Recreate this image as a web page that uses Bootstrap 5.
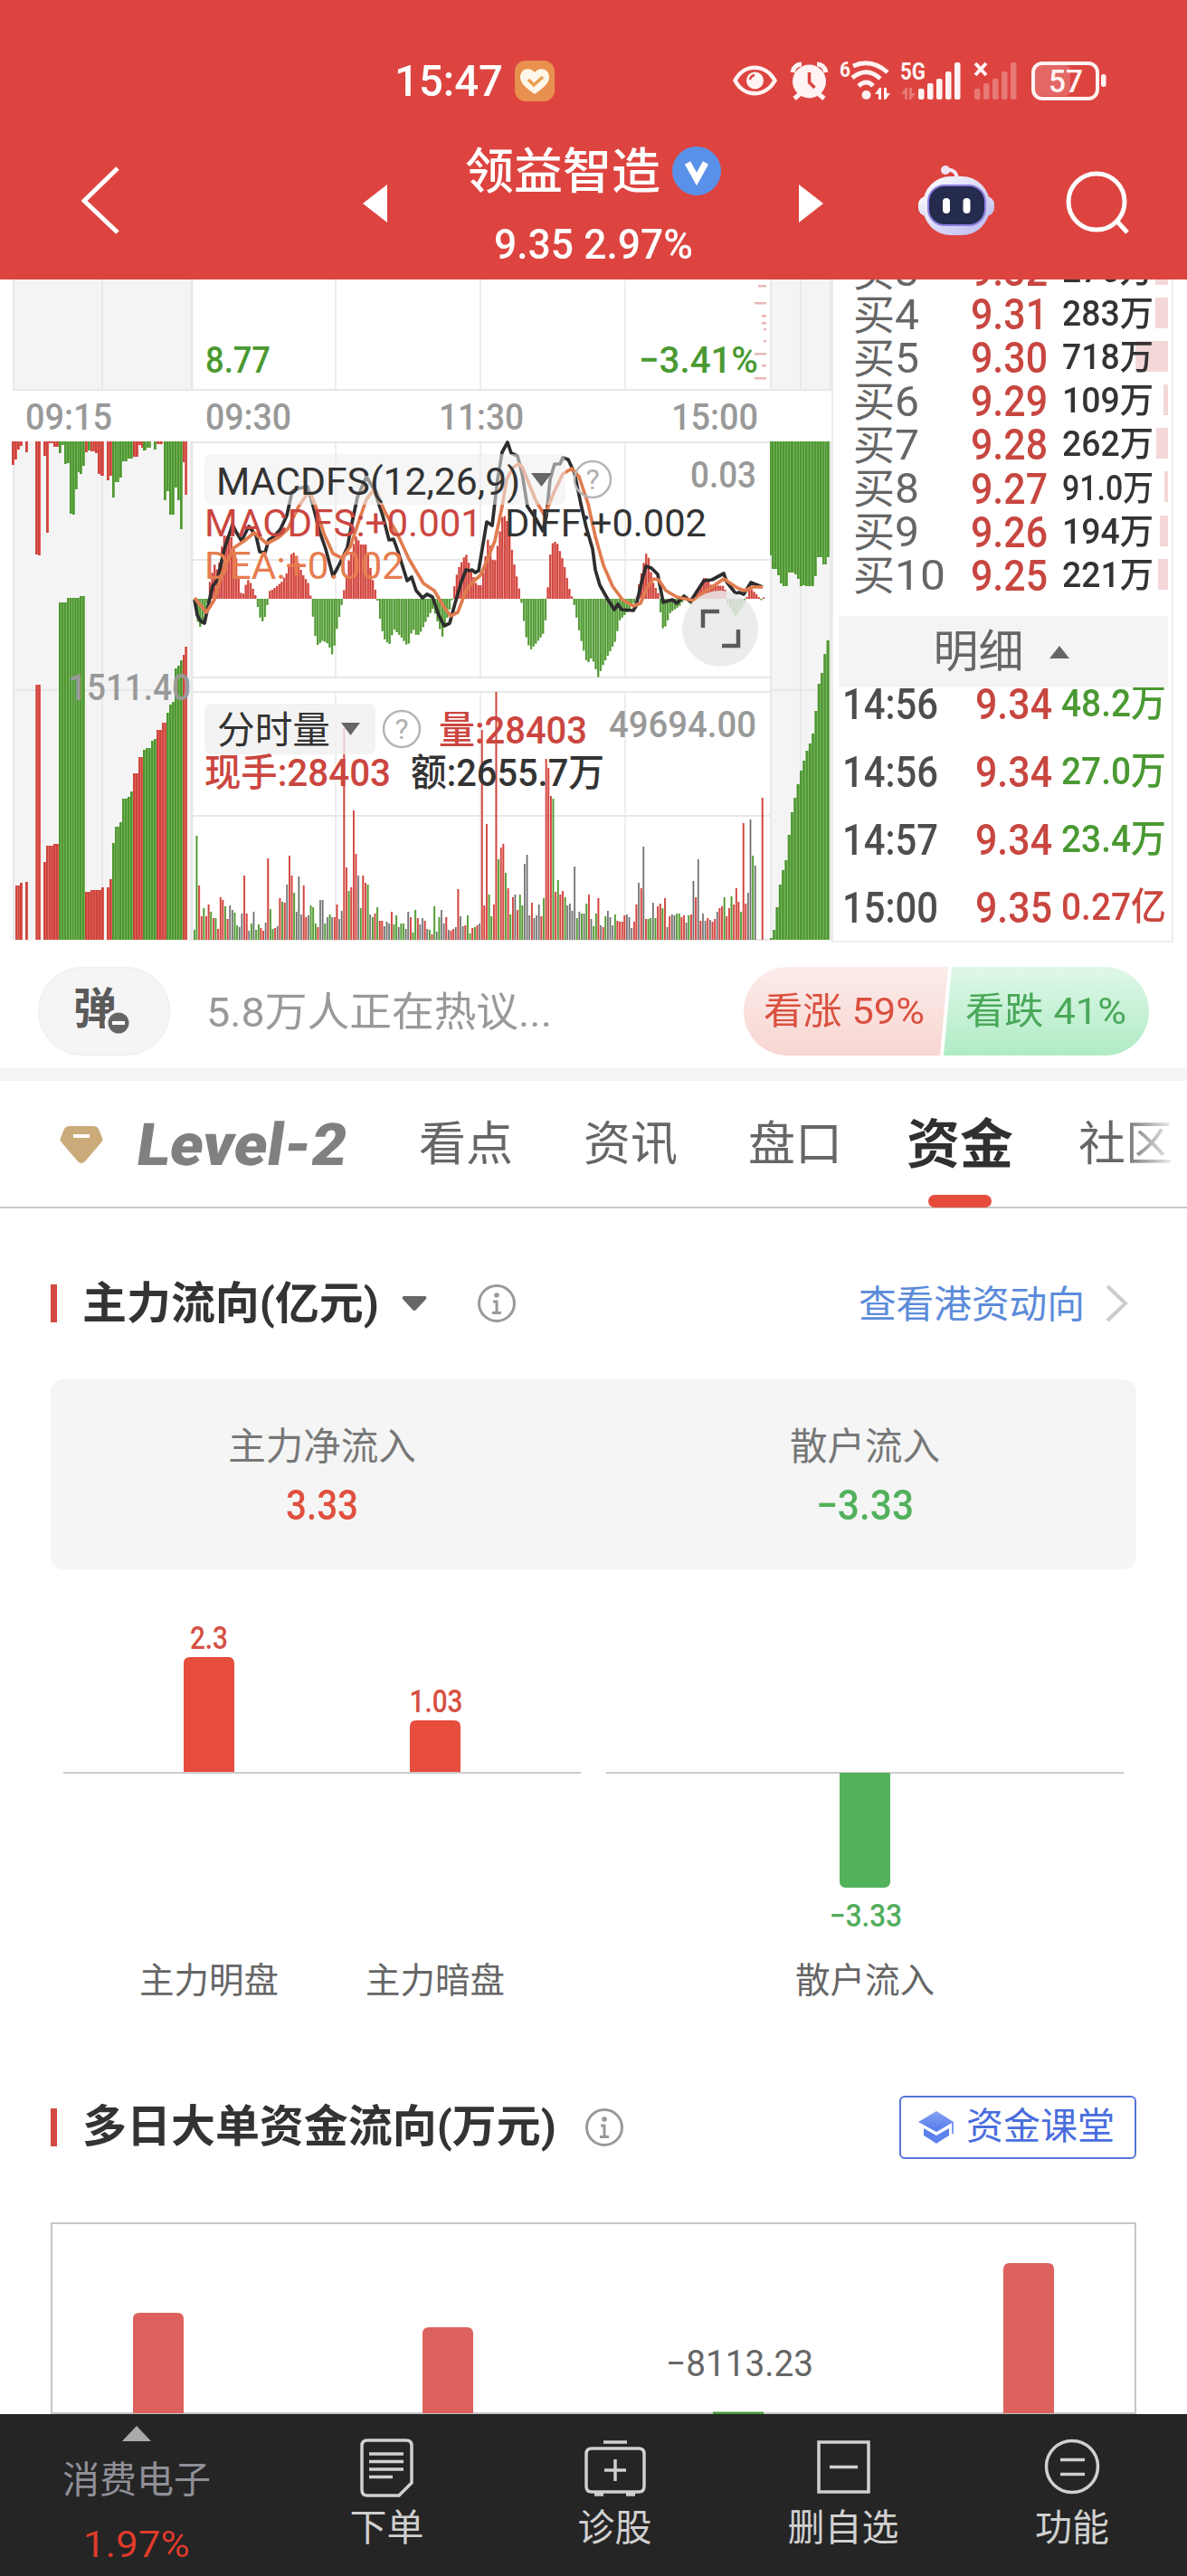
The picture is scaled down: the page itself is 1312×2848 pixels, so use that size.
<!DOCTYPE html>
<html lang="zh-CN">
<head>
    <meta charset="UTF-8">
    <meta name="viewport" content="width=device-width, initial-scale=1.0">
    <title>领益智造 - 资金</title>
    <link href="https://cdn.jsdelivr.net/npm/bootstrap@5.3.0/dist/css/bootstrap.min.css" rel="stylesheet">
    <style>
        body {
            width: 1312px;
            height: 2848px;
            overflow: hidden;
            font-family: Roboto, "Noto Sans CJK SC", sans-serif;
            color: #333;
            background: #fff;
            line-height: 1;
        }
        svg { display: block; flex: none; }
        .fit { display: inline-block; white-space: nowrap; transform-origin: 0 50%; }
        .up { color: #e0503f; }
        .down { color: #52b15c; }

        .top-bar { background: #dd4440; color: #fff; height: 309px; }
        .status-row { height: 135px; padding: 64px 0 0 436px; }
        .status-row .clock { font-size: 48px; font-weight: 500; width: 133px; padding-top: 2px; }
        .heart { margin-top: 3px; }
        .status-icons { margin-left: 196px; }
        .title-row { height: 174px; padding-left: 90px; }
        .stock-box { width: 455px; height: 174px; padding-top: 25px; }
        .stock-name { font-size: 54px; font-weight: 500; height: 58px; }
        .stock-name span { padding-top: 3px; }
        .stock-price { font-size: 47px; font-weight: 500; margin-top: 28px; }

        .quote-row { height: 733px; }
        .order-panel { width: 378px; height: 733px; border: 2px solid #ededed; border-top: 0; padding: 0 4px 0 6px; overflow: hidden; }
        .book { height: 372px; overflow: hidden; }
        .book-list { margin-top: -35px; }
        .book-item { height: 48.1px; padding: 3px 0 0 16px; position: relative; }
        .book-item .b-label { width: 130px; font-size: 46px; color: #666; }
        .book-item .b-price { width: 101px; font-size: 49px; font-weight: 500; color: #c84640; }
        .book-item .b-vol { font-size: 39px; font-weight: 500; color: #333; position: relative; }
        .book-item .b-bar { position: absolute; right: 0; top: 7px; height: 34px; background: #f4d7d8; }
        .detail-btn { height: 79px; background: #f4f4f4; color: #666; font-size: 50px; gap: 28px; padding-right: 5px; }
        .deals { height: 280px; overflow: hidden; }
        .deal-item { height: 75px; padding: 3px 0 0 4px; }
        .deals .deal-item:first-child { margin-top: -21px; }
        .deal-item .d-time { width: 147px; font-size: 49px; font-weight: 500; color: #4d4d4d; }
        .deal-item .d-price { width: 95px; font-size: 49px; font-weight: 500; color: #c84640; }
        .deal-item .d-vol { font-size: 42px; font-weight: 500; }

        .talk-row { height: 139px; padding: 27px 42px 14px 42px; }
        .dan-btn { width: 146px; height: 98px; border-radius: 49px; background: #f5f5f5; border: 1px solid #ececec; font-size: 48px; font-weight: 700; color: #5a5a5a; position: relative; padding: 0 0 4px 38px; }
        .dan-btn svg { position: absolute; left: 72px; top: 45px; }
        .talk-text { font-size: 45px; color: #999; margin-left: 40px; padding-top: 3px; }
        .vote { width: 448px; height: 98px; border-radius: 49px; overflow: hidden; font-size: 41px; }
        .vote-up { width: 228px; color: #da5040; background: linear-gradient(#fbecea, #f8d6d1); clip-path: polygon(0 0, 100% 0, 217px 100%, 0 100%); padding-left: 22px; }
        .vote-down { width: 231px; margin-left: -7px; color: #4aa85a; background: linear-gradient(#dff8e8, #b0ebc5); clip-path: polygon(11px 0, 100% 0, 100% 100%, 2px 100%); padding-left: 26px; }
        .divider { height: 14px; background: #f4f4f4; }

        .tabs { height: 141px; border-bottom: 2px solid #cacaca; padding-left: 66px; font-size: 52px; color: #666; }
        .tab-item { height: 139px; line-height: 142px; position: relative; white-space: nowrap; }
        .level2 { font-size: 65px; font-weight: 700; color: #808080; }
        .level2 b { display: inline-block; transform: skewX(-8deg); }
        .tab-on { font-size: 59px; font-weight: 700; color: #303030; }
        .tab-on::after { content: ""; position: absolute; left: 24px; bottom: -1px; width: 70px; height: 14px; border-radius: 7px; background: #e64c3c; }
        .tab-fade { background: linear-gradient(90deg, #666 45%, #eee 100%); -webkit-background-clip: text; background-clip: text; color: transparent; }

        .sec-head { padding: 0 56px; }
        .sec-head .tick { width: 7px; height: 42px; background: #d24a41; margin-right: 28px; }
        .sec-title { font-size: 49px; font-weight: 700; }
        .link-hk { font-size: 41.7px; color: #5b8bd9; gap: 23px; }
        .link-hk span { padding-top: 3px; }
        .sum-card { margin: 0 56px 25px; height: 210px; border-radius: 14px; background: #f5f5f5; padding-top: 54px; font-size: 41.5px; color: #777; }
        .sum-card .num { font-size: 46px; font-weight: 500; margin-top: 20px; }
        .flow-chart { margin: 0 56px; height: 470px; }
        .class-btn { width: 262px; height: 70px; border: 2px solid #5674d8; border-radius: 6px; color: #4a6ddd; font-size: 41px; padding-left: 19px; gap: 13px; }
        .multi-chart { margin: 0 56px; height: 212px; border: 2px solid #c6c6c6; border-bottom: 0; }
        .multi-chart svg { margin-left: -2px; }

        .bottom-nav { height: 179px; background: #252525; color: #d0d0d0; font-size: 41px; }
        .nav-cell { padding-top: 27px; }
        .nav-cell span { margin-top: 14px; }
        .nav-cell.first { width: 302px; padding-top: 13px; color: #8f8f98; }
        .nav-cell.first span { margin-top: 0; }
    </style>
</head>
<body>
    <header class="top-bar">
        <div class="status-row d-flex align-items-start">
            <div class="clock"><span class="fit" data-w="120">15:47</span></div>
            <svg class="heart" width="44" height="45" viewBox="0 0 44 45">
                <rect width="44" height="45" rx="12" fill="#e8914f"/>
                <path d="M22 37C12 30 6 25 6 18c0-9 11-12 16-5 5-7 16-4 16 5 0 7-6 12-16 19z" fill="#fff6ea"/>
                <path d="M15 21l6 6 10-9" fill="none" stroke="#e9a04f" stroke-width="3.5"/>
            </svg>
            <svg class="status-icons" width="420" height="50" viewBox="809 64 420 50" fill="#fff3f3">
                <path d="M812.500 89C822 70 846 70 856.500 89C846 108 822 108 812.500 89z" fill="none" stroke="#fff3f3" stroke-width="4.500"/>
                <circle cx="834.500" cy="89" r="9.500"/>
                <path d="M829 88a6 6 0 0 1 5-5" stroke="#dd4440" stroke-width="2.500" fill="none"/>
                <circle cx="894.500" cy="90" r="18.500"/>
                <path d="M876 80q2-9 10-9M913 80q-2-9-10-9M884 104l-6 5M905 104l6 5" stroke="#fff3f3" stroke-width="5" fill="none"/>
                <path d="M894.500 80v11l6 6" stroke="#dd4440" stroke-width="3.500" fill="none"/>
                <text x="928" y="85" font-size="24" font-weight="700" textLength="12" lengthAdjust="spacingAndGlyphs">6</text>
                <path d="M943 73q20-9 38 7M942 86q16-13 31 1M949 95q9-8 16 0" stroke="#fff3f3" stroke-width="5" fill="none"/>
                <circle cx="957.500" cy="105" r="5"/>
                <path d="M967 104l5-7h2v13h-3v-6zM984 103l-5 7h-2V97h3v6z"/>
                <text x="995" y="88" font-size="26" font-weight="700" textLength="28" lengthAdjust="spacingAndGlyphs">5G</text>
                <path d="M996 104l5-7h2v13h-3v-6zM1012 103l-5 7h-2V97h3v6z" opacity=".3"/>
                <g id="bars1"></g>
                <path d="M1078 70l12 13m0-13l-12 13" stroke="#fff3f3" stroke-width="4"/>
                <g id="bars2" opacity=".3"></g>
                <rect x="1144" y="72" width="39" height="34" rx="6" opacity=".2"/>
                <rect x="1142" y="70" width="71" height="39" rx="10" fill="none" stroke="#fff3f3" stroke-width="4"/>
                <rect x="1217" y="82" width="5.500" height="14" rx="2.500"/>
                <text x="1159" y="101.500" font-size="35" font-weight="500" textLength="38" lengthAdjust="spacingAndGlyphs">57</text>
            </svg>
        </div>
        <div class="title-row d-flex">
            <svg width="311" height="174" viewBox="90 135 311 174"><path d="M130 186L93 222l37 35" fill="none" stroke="#fff" stroke-width="5"/></svg>
            <svg width="27" height="174" viewBox="401 135 27 174"><path d="M401 225l27-21v42z" fill="#fff"/></svg>
            <div class="stock-box">
                <div class="stock-name d-flex justify-content-center align-items-center">
                    <span>领益智造</span>
                    <svg style="margin-left:13px" width="54" height="54"><circle cx="27" cy="27" r="27" fill="#5a91e8"/><path d="M17 18l10 18 10-18" fill="none" stroke="#fff" stroke-width="7"/></svg>
                </div>
                <div class="stock-price text-center"><span class="fit" data-w="220">9.35 2.97%</span></div>
            </div>
            <svg width="27" height="174" viewBox="883 135 27 174"><path d="M910 225l-27-21v42z" fill="#fff"/></svg>
            <svg width="402" height="174" viewBox="910 135 402 174">
                <defs><linearGradient id="bot" x1="0" y1="0" x2="1" y2="1"><stop offset="0" stop-color="#fff"/><stop offset="1" stop-color="#bbb8ee"/></linearGradient></defs>
                <path d="M1045 188q12-2 13 10" fill="none" stroke="#f3eefb" stroke-width="4"/>
                <circle cx="1045" cy="188" r="5" fill="#ece6f6"/>
                <rect x="1015" y="217" width="84" height="22" rx="9" fill="url(#bot)"/>
                <rect x="1020" y="195" width="74" height="65" rx="31" fill="url(#bot)"/>
                <rect x="1026" y="205" width="63" height="44" rx="18" fill="#242b4d" stroke="#8e7fe2" stroke-width="2"/>
                <rect x="1042" y="219" width="8" height="17" rx="4" fill="#fff"/>
                <rect x="1064.500" y="219" width="8" height="17" rx="4" fill="#fff"/>
                <circle cx="1212" cy="223" r="31" fill="none" stroke="#fff" stroke-width="5"/>
                <path d="M1235 245l11 12" stroke="#fff" stroke-width="5"/>
            </svg>
        </div>
    </header>

    <div class="quote-row d-flex">
        <svg id="quoteChart" width="919" height="733" viewBox="0 309 919 733" font-size="41"></svg>
        <div class="order-panel">
            <div class="book"><div class="book-list" id="bookList"></div></div>
            <div class="detail-btn d-flex justify-content-center align-items-center">
                <span>明细</span>
                <svg width="22" height="14"><path d="M0 14L11 0l11 14z" fill="#666"/></svg>
            </div>
            <div class="deals" id="dealList"></div>
        </div>
    </div>

    <div class="talk-row d-flex align-items-center">
        <div class="dan-btn d-flex align-items-center">弹
            <svg width="32" height="32"><circle cx="16" cy="16" r="13.500" fill="#666" stroke="#f5f5f5" stroke-width="4"/><path d="M9 16h14" stroke="#fff" stroke-width="4"/></svg>
        </div>
        <div class="talk-text"><span class="fit" data-w="382">5.8万人正在热议...</span></div>
        <div class="vote d-flex ms-auto">
            <div class="vote-up d-flex align-items-center"><span class="fit" data-w="178">看涨 59%</span></div>
            <div class="vote-down d-flex align-items-center"><span class="fit" data-w="178">看跌 41%</span></div>
        </div>
    </div>
    <div class="divider"></div>

    <nav class="tabs d-flex align-items-center">
        <svg width="48" height="42"><path d="M10 1h28q3 0 5 3l4 10q1 3-1 5L28 40q-4 4-8 0L2 19q-2-2-1-5L5 4q2-3 5-3z" fill="#cbab7a"/><path d="M15 12h18" stroke="#fff" stroke-width="4"/></svg>
        <div class="tab-item level2" style="margin-left:38px;width:231px"><span class="fit" data-w="232"><b>Level-2</b></span></div>
        <div class="tab-item" style="margin-left:80px;width:104px">看点</div>
        <div class="tab-item" style="margin-left:78px;width:104px">资讯</div>
        <div class="tab-item" style="margin-left:78px;width:104px">盘口</div>
        <div class="tab-item tab-on" style="margin-left:71px;width:118px">资金</div>
        <div class="tab-item tab-fade" style="margin-left:72px">社区</div>
    </nav>

    <div class="sec-head d-flex align-items-center" style="height:189px;padding-top:21px">
        <i class="tick"></i>
        <div class="sec-title"><span class="fit" data-w="328">主力流向(亿元)</span></div>
        <svg style="margin-left:25px" width="28" height="16"><path d="M2 0h24q2 1 1 3L16 15q-2 2-4 0L1 3Q0 1 2 0z" fill="#666"/></svg>
        <svg style="margin-left:55px" width="44" height="44"><use href="#info"/></svg>
        <div class="link-hk d-flex align-items-center ms-auto me-2"><span>查看港资动向</span>
            <svg width="26" height="42"><path d="M2 2l20 19L2 40" fill="none" stroke="#ccc" stroke-width="4"/></svg>
        </div>
    </div>
    <div class="sum-card row gx-0 text-center">
        <div class="col-6"><div>主力净流入</div><div class="num up"><span class="fit" data-w="80">3.33</span></div></div>
        <div class="col-6"><div>散户流入</div><div class="num down"><span class="fit" data-w="108">−3.33</span></div></div>
    </div>
    <svg class="flow-chart" width="1200" height="470" viewBox="56 1760 1200 470" text-anchor="middle" font-size="35">
        <path d="M70 1960H642M670 1960H1242" stroke="#ccc" stroke-width="2"/>
        <path d="M203 1959v-120q0-7 7-7h42q7 0 7 7v120zM453 1959v-50q0-7 7-7h42q7 0 7 7v50z" fill="#e64d3d"/>
        <path d="M928 1960v120q0 7 7 7h42q7 0 7-7v-120z" fill="#51b25b"/>
        <g font-weight="500">
            <text x="231" y="1823" fill="#d64f42" textLength="42" lengthAdjust="spacingAndGlyphs">2.3</text>
            <text x="482" y="1893" fill="#d64f42" textLength="59" lengthAdjust="spacingAndGlyphs">1.03</text>
            <text x="957" y="2130" fill="#52ad5c" textLength="80" lengthAdjust="spacingAndGlyphs">−3.33</text>
        </g>
        <g font-size="38.500" fill="#666">
            <text x="231" y="2203">主力明盘</text>
            <text x="481" y="2203">主力暗盘</text>
            <text x="956" y="2203">散户流入</text>
        </g>
    </svg>

    <div class="sec-head d-flex align-items-center" style="height:227px;padding-top:16px">
        <i class="tick"></i>
        <div class="sec-title"><span class="fit" data-w="524">多日大单资金流向(万元)</span></div>
        <svg style="margin-left:31px" width="44" height="44">
            <g id="info" fill="none" stroke="#999">
                <circle cx="22" cy="22" r="19.500" stroke-width="3"/>
                <path d="M18 20h4v12M17 32.500h10" stroke-width="3"/>
                <circle cx="22" cy="13" r="2.800" fill="#999" stroke="none"/>
            </g>
        </svg>
        <div class="class-btn d-flex align-items-center ms-auto">
            <svg width="40" height="36">
                <defs><linearGradient id="cap" x1="0" y1="0" x2="0" y2="1"><stop offset="0" stop-color="#86a4f5"/><stop offset="1" stop-color="#5379ea"/></linearGradient></defs>
                <path d="M20 0l19 12-19 11L0 12z" fill="url(#cap)"/>
                <path d="M6 19l14 8 14-8v8q-7 4-14 9-7-5-14-9z" fill="#5d82ec"/>
                <path d="M38 12v13" stroke="#7c9bf2" stroke-width="2"/>
            </svg>
            资金课堂
        </div>
    </div>
    <div class="multi-chart">
        <svg width="1200" height="210" viewBox="56 2459 1200 210">
            <path d="M58 2668H1254" stroke="#c6c6c6" stroke-width="2"/>
            <path d="M147 2668v-104q0-7 7-7h42q7 0 7 7v104zM467 2668v-88q0-7 7-7h42q7 0 7 7v88zM1109 2668v-159q0-7 7-7h42q7 0 7 7v159z" fill="#dd625d"/>
            <path d="M788 2668h56" stroke="#4b9a3c" stroke-width="3"/>
            <text x="736" y="2627" font-size="41" fill="#666" textLength="163" lengthAdjust="spacingAndGlyphs">−8113.23</text>
        </svg>
    </div>

    <footer class="bottom-nav d-flex">
        <div class="nav-cell first d-flex flex-column align-items-center">
            <svg width="32" height="17"><path d="M0 17L16 0l16 17z" fill="#aaa"/></svg>
            <span style="margin-top:23px">消费电子</span>
            <span style="margin-top:30px;color:#e03a2b"><span class="fit" data-w="118">1.97%</span></span>
        </div>
        <div class="nav-cell d-flex flex-column align-items-center" style="width:251px">
            <svg width="60" height="65" fill="none" stroke="#d0d0d0" stroke-width="3.500"><path d="M8 2h43q6 0 6 6v41L43 63H8q-6 0-6-6V8q0-6 6-6zM10 17h38M10 25.500h38M10 34h38M10 42.500h26"/></svg>
            <span>下单</span>
        </div>
        <div class="nav-cell d-flex flex-column align-items-center" style="width:253px">
            <svg width="68" height="65" fill="none" stroke="#d0d0d0" stroke-width="3.500"><path d="M8 11h52q6 0 6 6v36q0 6-6 6H8q-6 0-6-6V17q0-6 6-6zM21 4h26M34 23v24M22 35h24M11 62h10M46 62h10"/></svg>
            <span>诊股</span>
        </div>
        <div class="nav-cell d-flex flex-column align-items-center" style="width:252px">
            <svg width="60" height="65" fill="none" stroke="#d0d0d0" stroke-width="3.500"><path d="M3 4h55v55H3zM15 31.500h31"/></svg>
            <span>删自选</span>
        </div>
        <div class="nav-cell d-flex flex-column align-items-center" style="width:254px">
            <svg width="62" height="65" fill="none" stroke="#d0d0d0" stroke-width="3.500"><circle cx="31" cy="31" r="28.500"/><path d="M18 23.500h27M18 39.500h27"/></svg>
            <span>功能</span>
        </div>
    </footer>

    <script>
        const GRID = "#e8e8e8";
        const COLORS = { r: ["#f0605a", "#c9463f"], g: ["#7cba5e", "#4f9634"], k: ["#b5b5b5", "#6c6c6c"] };

        // signal strength bars in the status row
        [12, 18, 23, 31, 41].forEach((h, i) => {
            let bar = (x) => `<rect x="${x + i * 10}" y="${110 - h}" width="6.500" height="${h}" rx="2"/>`;
            document.getElementById("bars1").innerHTML += bar(1015);
            document.getElementById("bars2").innerHTML += bar(1077);
        });

        function line(x1, y1, x2, y2, w = 2) {
            return `<path d="M${x1} ${y1}L${x2} ${y2}" stroke="${GRID}" stroke-width="${w}"/>`;
        }
        function rect(x, y, w, h, fill, extra = "") {
            return `<rect x="${x}" y="${y}" width="${w}" height="${h}" fill="${fill}" ${extra}/>`;
        }
        function text(x, y, w, str, fill, extra = "") {
            return `<text x="${x}" y="${y}" fill="${fill}" textLength="${w}" lengthAdjust="spacingAndGlyphs" ${extra}>${str}</text>`;
        }
        // one candle-thin bar: light body with a darker core
        function stick(x, y, w, h, c) {
            return rect(x, y, w, h, COLORS[c][0]) + rect(x, y, w * 0.72, h, COLORS[c][1]);
        }
        // run of equal bars between x0 and x1
        function run(x0, x1, y, h, c) {
            let n = Math.max(1, Math.round((x1 - x0) / 2.9)), w = (x1 - x0) / n, s = "";
            for (let i = 0; i < n; i++) s += stick(x0 + i * w, y, w, h, c);
            return s;
        }
        function question(cx, cy) {
            return `<circle cx="${cx}" cy="${cy}" r="20" fill="none" stroke="#b5b5b5" stroke-width="2.500"/>` +
                `<text x="${cx}" y="${cy + 11}" text-anchor="middle" font-size="32" fill="#b0b0b0">?</text>`;
        }

        let svg = "";
        // panels and grid
        svg += rect(14, 309, 198, 122, "#f4f4f4") + rect(851, 309, 68, 122, "#f4f4f4");
        svg += rect(14, 488, 198, 552, "#f4f4f4") + rect(851, 488, 68, 552, "#f4f4f4");
        [[309, 432], [488, 1040]].forEach(([a, b]) => {
            svg += line(15, a, 15, b) + line(113, a, 113, b) + line(212, a, 212, b, 3) + line(852, a, 852, b) + line(885, a, 885, b) + line(918, a, 918, b);
        });
        [[309, 431], [488, 750], [765, 1039]].forEach(([a, b]) => {
            [371, 531, 691].forEach(x => svg += line(x, a, x, b, 1.5));
        });
        svg += line(14, 431, 919, 431);
        [489, 619, 749, 765, 902, 1039].forEach(y => svg += line(213, y, 851, y));
        svg += line(14, 763, 212, 763) + line(851, 763, 919, 763);

        // price distribution ticks at the panel edge
        [[315, 9], [334, 13], [348, 5], [356, 5], [363, 3], [376, 3], [390, 13], [403, 5], [417, 13]].forEach(([y, w]) => svg += rect(847 - w, y, w, 2.5, "#e9b7b7"));

        // opening auction, upper part
        [[13,16,26,"r"],[16,19,20,"r"],[19,22,9,"r"],[22,25,5,"r"],[28,31,12,"r"],[39,42,125,"r"],[42,45,126,"r"],[48,51,16,"r"],[51,54,101,"r"],[54,59,2,"r"],[59,65,6,"r"],[65,68,13,"g"],[68,71,4,"g"],[71,74,25,"g"],[74,77,24,"g"],[77,80,80,"g"],[80,83,81,"g"],[83,86,53,"g"],[86,88,34,"g"],[88,91,36,"g"],[91,94,27,"g"],[94,97,12,"r"],[97,100,10,"g"],[100,105,11,"r"],[105,108,13,"r"],[108,111,36,"r"],[111,115,38,"r"],[118,121,43,"r"],[121,124,38,"r"],[124,127,62,"g"],[127,132,45,"g"],[132,135,40,"g"],[135,141,22,"g"],[141,147,19,"g"],[147,153,17,"r"],[153,156,4,"r"],[156,158,7,"r"],[158,162,10,"g"],[162,167,7,"g"],[170,173,9,"g"],[173,180,3,"r"],[181,184,65,"g"],[184,187,55,"g"],[187,193,81,"g"],[193,196,51,"g"],[196,199,65,"g"],[199,202,97,"g"],[202,204.5,23,"r"],[204.5,207,59,"r"]]
            .forEach(([a, b, h, c]) => svg += run(a, b, 488, h, c));
        // opening auction, volume
        [[17,22,979,"r"],[22,25,976,"r"],[28,31,975,"r"],[39.5,45,757,"r"],[48,51,953,"r"],[51,59,935,"r"],[59,65,933,"r"],[65,74,666,"g"],[74,88,661,"g"],[88,94,659,"g"],[94,100,986,"r"],[100,112,984,"r"],[112,115,981,"r"],[118,121,981,"r"],[121,124,972,"r"],[124,127,932,"g"],[127,132,914,"g"],[132,135,909,"g"],[135,141,883,"g"],[141,144,881,"g"],[144,147,875,"g"],[147,153,855,"r"],[153,158,837,"r"],[158,161,829,"g"],[161,167,827,"g"],[167,170,819,"g"],[170,173,817,"g"],[173,179,807,"r"],[179,184,799,"r"],[184,187,788,"g"],[187,190,779,"g"],[190,193,776,"g"],[193,196,739,"g"],[196,199,736,"g"],[199,202,730,"g"],[202,204.5,724,"r"],[204.5,207,715,"r"]]
            .forEach(([a, b, y, c]) => svg += run(a, b, y, 1039 - y, c));
        // closing auction
        [[851,853,614],[853,859,629],[859,862,636],[862,865,645],[865,871,648],[871,874,633],[874,878,633],[878,881,635],[881,884,640],[884,887,648],[887,890,647],[890,900,648],[900,903,637],[903,909,616],[909,914,624],[914,917,616]]
            .forEach(([a, b, y]) => svg += run(a, b, 488, y - 488, "g"));
        [1037,1028,1003,978,962,951,923,898,882,867,852,841,830,822,811,786,756,744,723,708]
            .forEach((y, i) => svg += stick(851 + i * 3.3, y, 3.3, 1039 - y, "g"));

        // MACD histogram, interpolated between knots
        const hist = [215,-5,218,-28,221,-32,226,-15,229,-1,230,15,236,38,240,30,246,70,255,68,260,45,265,8,267,-1,269,12,274,22,279,10,282,2,283,-5,288,-27,293,-18,295,-3,296,8,300,10,310,18,317,30,322,54,327,45,333,28,341,15,342,5,343,-3,346,-30,349,-52,356,-46,362,-50,367,-64,371,-35,377,-5,378,5,380,12,385,45,393,70,397,60,404,60,410,25,415,5,417,-5,420,-30,425,-47,430,-50,434,-33,443,-43,450,-53,455,-32,460,-42,465,-35,471,-22,478,-10,488,-42,492,-25,498,-5,500,8,505,32,514,50,520,30,526,15,531,15,539,70,545,35,555,95,560,85,567,40,573,10,576,-8,580,-40,585,-57,595,-45,601,-36,604,5,608,60,614,64,622,40,629,8,633,-3,640,-40,648,-72,653,-65,656,-72,660,-87,666,-72,675,-55,680,-45,683,-25,692,-15,702,-2,706,20,713,50,716,45,720,20,727,5,731,-33,735,-30,740,-15,750,-8,758,3,763,-8,768,5,778,25,785,15,800,14,803,-5,812,-20,822,-5,828,12,835,5,841,-2,844,3];
        for (let x = 215, k = 0; x < 844; x += 2.65) {
            while (hist[k + 2] < x) k += 2;
            let t = (x - hist[k]) / (hist[k + 2] - hist[k]);
            let v = hist[k + 1] + t * (hist[k + 3] - hist[k + 1]);
            svg += stick(x, v > 0 ? 662 - v : 662, 2.3, Math.abs(v), v > 0 ? "r" : "g");
        }
        // DIFF and DEA lines
        const diff = "215,663 218,680 222,687 226,689 230,670 235,648 240,642 248,607 257,580 261,588 267,598 275,582 279,587 283,592 287,610 293,611 297,597 303,593 310,585 317,570 323,543 330,540 340,538 347,563 353,587 360,607 368,637 373,628 378,618 384,605 388,583 395,550 405,527 413,540 423,570 430,597 435,596 440,610 450,642 455,638 460,653 467,661 472,657 478,660 485,680 491,692 497,689 503,667 510,643 515,630 519,631 522,630 525,633 529,631 533,607 538,577 544,581 550,530 555,500 561,489 565,501 572,504 577,523 583,560 592,573 600,587 604,570 608,530 613,513 619,513 622,506 628,508 635,523 642,557 648,583 655,607 658,630 663,647 672,663 679,674 683,668 687,674 700,675 703,670 710,640 714,626 720,628 727,635 733,666 743,663 748,667 756,659 763,665 778,642 787,641 800,634 803,643 813,656 817,655 822,657 830,644 835,646 843,649";
        const dea = "215,661 228,677 237,663 245,635 258,606 270,598 281,589 295,601 308,594 318,585 330,560 339,547 343,545 349,560 358,590 368,612 378,617 387,605 397,575 405,552 412,543 416,543 425,565 440,592 452,618 468,645 480,653 490,670 498,681 506,677 515,653 523,643 531,636 538,620 547,598 555,560 560,530 567,517 573,513 577,516 582,528 592,553 602,570 612,545 622,524 632,518 640,527 650,557 658,593 667,625 677,648 688,663 700,670 708,667 715,650 722,640 728,641 736,653 748,660 757,662 767,664 778,655 800,640 815,650 823,653 832,649 843,649";
        svg += `<g fill="none" stroke-width="3.700" stroke-linejoin="round"><polyline points="${diff}" stroke="#2d2d2d"/><polyline points="${dea}" stroke="#e07c50"/></g>`;

        // minute volume, colour letter plus height
        const vol = "g11 g115 r60 r26 g35 r26 r39 g31 r24 g24 r12 r47 r44 g37 r23 k38 k33 g30 g16 k14 k29 r71 r29 k10 g18 k31 g11 g17 r13 r10 k19 r90 g34 g12 r13 k15 r46 g42 r41 k61 r93 r71 g52 k31 k70 k28 r60 r25 k27 g38 g36 g18 r14 k44 k44 g18 k25 g28 k25 r25 r39 k23 k32 r234 r80 g54 r58 r143 r95 k71 g35 r71 r63 g61 k28 g25 r29 g36 r21 r21 k15 k20 k18 r31 g17 g27 k14 g18 g18 k12 k31 r25 g8 g33 r24 k17 k24 r21 k12 g11 r6 g37 k9 g25 k33 k18 r25 k11 r10 r12 k14 r56 k26 k15 r16 g27 g7 r13 g14 r16 k18 r232 r38 r128 g50 g26 r39 r274 g89 r102 r106 g74 r57 g28 r47 k50 r33 g50 g38 k84 k94 k27 r41 k24 k27 k39 r26 g46 r200 r190 r159 g156 r53 g66 r50 r54 g47 k38 k40 k32 k81 g24 k31 g29 k29 g40 r50 k23 g15 g29 r46 k16 r14 g26 k32 k25 k16 g28 r21 r20 r20 r27 k28 k25 k13 r20 r39 k63 r57 k103 r23 g23 g24 k41 g24 r37 r40 g35 r46 k14 r26 k28 k27 g29 g29 r25 r27 k19 g27 r28 k65 r47 k89 r21 k29 k21 r24 k22 r20 r23 k31 r35 r37 g47 r26 r35 g48 r39 r57 r42 g31 r129 r40 k52 k133 g93 k82 k0 k0 r157";
        vol.split(" ").forEach((v, i) => {
            let h = +v.slice(1);
            svg += stick(214 + i * 2.627, 1039 - h, 1.9, h, v[0]);
        });

        // labels
        const BOLD = 'font-weight="500"';
        svg += text(227, 412, 72, "8.77", "#4a9932", BOLD) + text(706, 412, 132, "−3.41%", "#4a9932", BOLD);
        svg += text(28, 475, 96, "09:15", "#999", BOLD) + text(227, 475, 95, "09:30", "#999", BOLD) + text(485, 475, 94, "11:30", "#999", BOLD) + text(742, 475, 96, "15:00", "#999", BOLD);
        svg += rect(226, 502, 399, 56, "#eee", 'rx="8" fill-opacity=".55"');
        svg += text(239, 547, 336, "MACDFS(12,26,9)", "#333", 'font-size="43"') + '<path d="M587 523h23l-11.500 15z" fill="#666"/>' + question(655, 530);
        svg += text(763, 539, 73, "0.03", "#999", BOLD);
        svg += text(226, 593, 307, "MACDFS:+0.001", "#cb4640", 'font-size="43"') + text(558, 593, 223, "DIFF:+0.002", "#333", 'font-size="43"') + text(226, 640, 220, "DEA:+0.002", "#e67d50", 'font-size="43"');
        svg += '<circle cx="796" cy="695" r="42" fill="#e9e9e9" fill-opacity=".85"/><path d="M777 694v-18h18M816 696v18h-18" fill="none" stroke="#5a5a5a" stroke-width="4.500"/>';
        svg += text(75, 774, 136, "1511.40", "#999", BOLD);
        svg += rect(226, 778, 189, 56, "#f0f0f0", 'rx="8" fill-opacity=".8"') + text(240, 822, 125, "分时量", "#333", 'font-size="42"') + '<path d="M377 799h21l-10.500 14z" fill="#666"/>' + question(444, 806);
        svg += text(485, 822, 164, "量:28403", "#cb4640", 'font-size="42" ' + BOLD) + text(673, 815, 163, "49694.00", "#999", BOLD);
        svg += text(226, 869, 206, "现手:28403", "#cb4640", 'font-size="42" ' + BOLD) + text(454, 869, 214, "额:2655.7万", "#333", 'font-size="42" ' + BOLD);
        document.getElementById("quoteChart").innerHTML = svg;

        // order book: level, price, volume, bar width
        const book = [[3, "9.32", "276万", 14], [4, "9.31", "283万", 14], [5, "9.30", "718万", 36], [6, "9.29", "109万", 5], [7, "9.28", "262万", 13], [8, "9.27", "91.0万", 4], [9, "9.26", "194万", 9], [10, "9.25", "221万", 11]];
        document.getElementById("bookList").innerHTML = book.map(([n, p, v, w]) =>
            `<div class="book-item d-flex align-items-center"><i class="b-bar" style="width:${w}px"></i><div class="b-label">买<span class="fit" data-w="${n > 9 ? 56 : 27}">${n}</span></div><div class="b-price"><span class="fit" data-w="85">${p}</span></div><div class="b-vol"><span class="fit" data-w="101">${v}</span></div></div>`).join("");

        const deals = [["14:56", "9.34", "48.2万", "#4a9932"], ["14:56", "9.34", "27.0万", "#4a9932"], ["14:57", "9.34", "23.4万", "#4a9932"], ["15:00", "9.35", "0.27亿", "#cb4640"]];
        document.getElementById("dealList").innerHTML = deals.map(([t, p, v, c]) =>
            `<div class="deal-item d-flex align-items-center"><div class="d-time"><span class="fit" data-w="106">${t}</span></div><div class="d-price"><span class="fit" data-w="85">${p}</span></div><div class="d-vol" style="color:${c}"><span class="fit" data-w="116">${v}</span></div></div>`).join("");

        document.querySelectorAll(".fit").forEach(el => {
            let natural = el.getBoundingClientRect().width, w = +el.dataset.w;
            el.style.transform = `scaleX(${w / natural})`;
            el.style.marginRight = (w - natural) + "px";
        });
    </script>
    <script src="https://cdn.jsdelivr.net/npm/bootstrap@5.3.0/dist/js/bootstrap.bundle.min.js"></script>
</body>
</html>
